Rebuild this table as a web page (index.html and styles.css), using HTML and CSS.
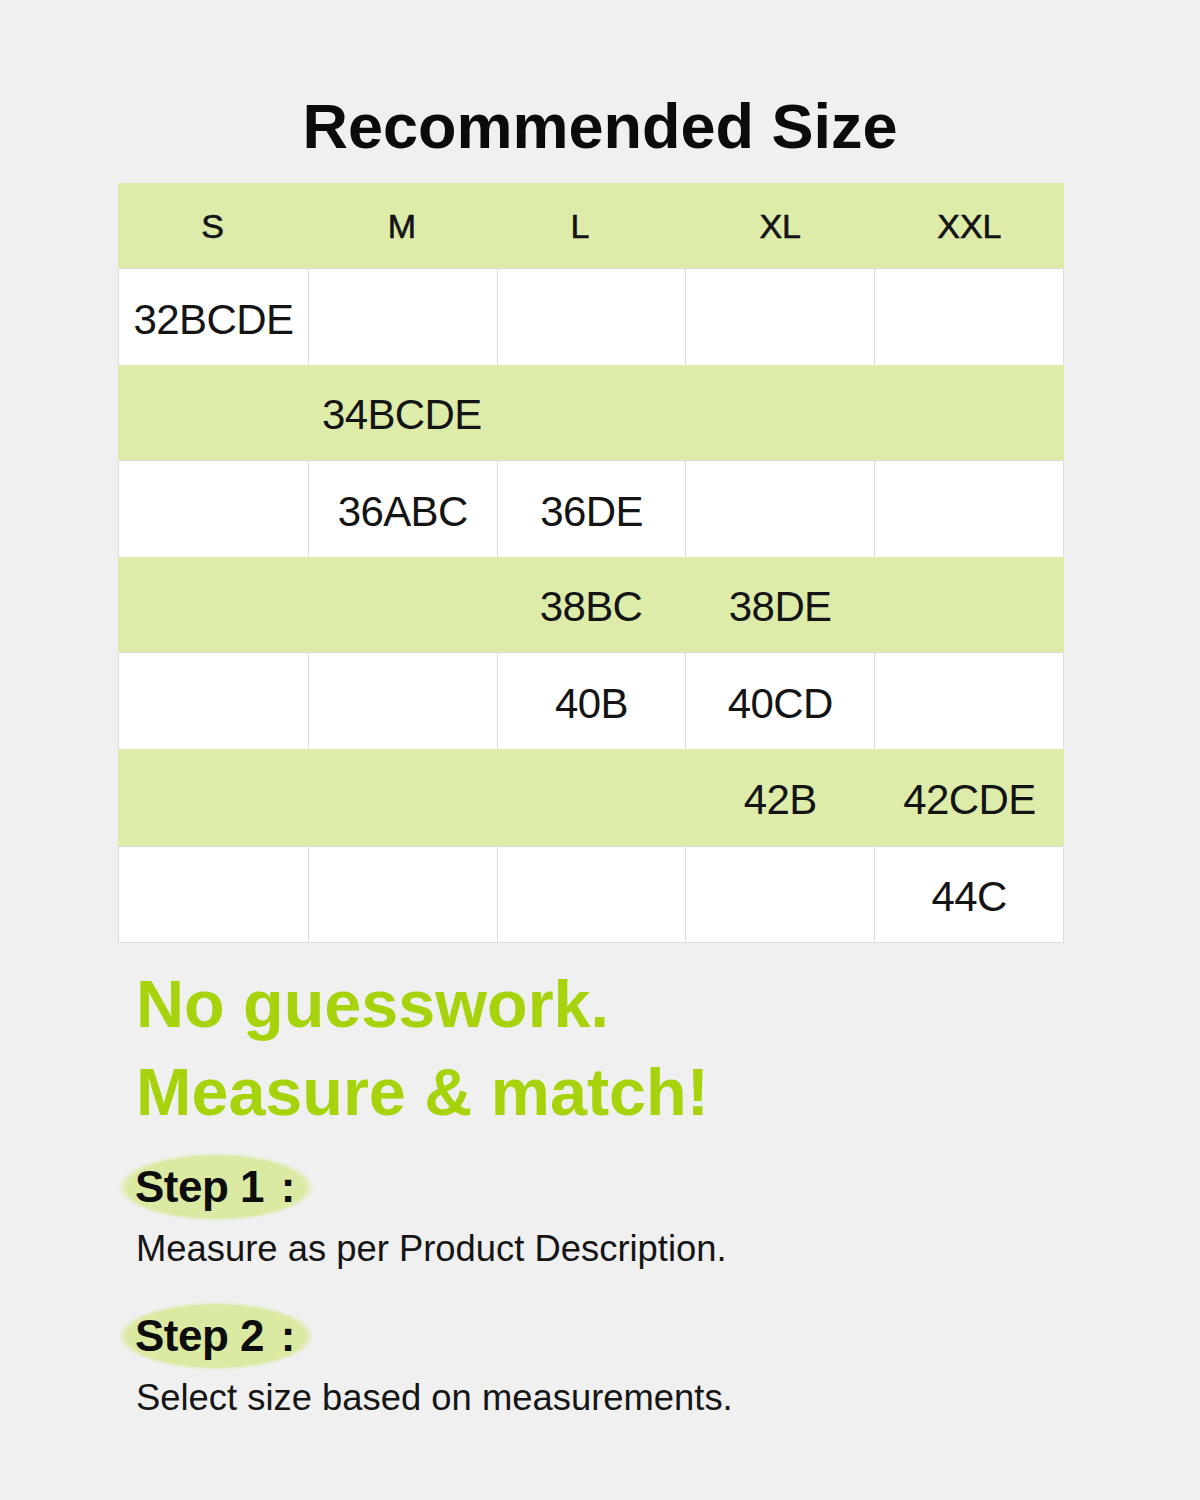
FILE: index.html
```html
<!DOCTYPE html>
<html lang="en">
<head>
<meta charset="utf-8">
<title>Recommended Size</title>
<link rel="stylesheet" href="styles.css">
</head>
<body>
<main class="page">
  <h1 class="title">Recommended Size</h1>
  <div class="chart">
    <div class="row head">
      <div class="cell">S</div><div class="cell">M</div><div class="cell shift">L</div><div class="cell">XL</div><div class="cell">XXL</div>
    </div>
    <div class="row white tall">
      <div class="cell">32BCDE</div><div class="cell"></div><div class="cell"></div><div class="cell"></div><div class="cell"></div>
    </div>
    <div class="row green short">
      <div class="cell"></div><div class="cell">34BCDE</div><div class="cell"></div><div class="cell"></div><div class="cell"></div>
    </div>
    <div class="row white tall">
      <div class="cell"></div><div class="cell">36ABC</div><div class="cell">36DE</div><div class="cell"></div><div class="cell"></div>
    </div>
    <div class="row green short">
      <div class="cell"></div><div class="cell"></div><div class="cell">38BC</div><div class="cell">38DE</div><div class="cell"></div>
    </div>
    <div class="row white tall">
      <div class="cell"></div><div class="cell"></div><div class="cell">40B</div><div class="cell">40CD</div><div class="cell"></div>
    </div>
    <div class="row green tall">
      <div class="cell"></div><div class="cell"></div><div class="cell"></div><div class="cell">42B</div><div class="cell">42CDE</div>
    </div>
    <div class="row white tall">
      <div class="cell"></div><div class="cell"></div><div class="cell"></div><div class="cell"></div><div class="cell">44C</div>
    </div>
  </div>
  <section class="guide">
    <h2 class="headline">No guesswork.<br>Measure &amp; match!</h2>
    <div class="step">
      <span class="label">Step 1 <span class="colon">:</span></span>
      <p class="desc">Measure as per Product Description.</p>
    </div>
    <div class="step second">
      <span class="label">Step 2 <span class="colon">:</span></span>
      <p class="desc">Select size based on measurements.</p>
    </div>
  </section>
</main>
</body>
</html>
```
FILE: styles.css
```css
html, body {
  margin: 0;
  padding: 0;
  background: #f0f0f0;
}
body {
  font-family: "Liberation Sans", Arial, "Noto Sans CJK SC", sans-serif;
  color: #111;
  width: 1200px;
  height: 1500px;
  overflow: hidden;
}
.page {
  padding: 90px 136px 0 118px;
}
.title {
  margin: 0 -136px 21px -118px;
  text-align: center;
  font-size: 63px;
  line-height: 72px;
  font-weight: 700;
  color: #0b0b0b;
  letter-spacing: 0;
}
.chart {
  width: 946px;
  display: flex;
  flex-direction: column;
}
.row {
  display: grid;
  grid-template-columns: repeat(5, 1fr);
  box-sizing: border-box;
}
.row.head {
  height: 85px;
  background: #deecaa;
}
.row.tall { height: 97px; }
.row.short { height: 95px; }
.row.green {
  background: #deecaa;
}
.row.white {
  background: #ffffff;
  border: 1px solid #dcdcdc;
  border-bottom: none;
}
.row.white:last-child {
  border-bottom: 1px solid #dcdcdc;
}
.row.white .cell + .cell {
  border-left: 1px solid #dcdcdc;
}
.cell {
  display: flex;
  align-items: center;
  justify-content: center;
  font-size: 42px;
  letter-spacing: -0.6px;
  color: #141414;
  padding-top: 5px;
  box-sizing: border-box;
}
.head .cell {
  font-size: 34px;
  letter-spacing: 0;
  padding-top: 2px;
  -webkit-text-stroke: 0.6px #141414;
}
.head .cell.shift {
  padding-right: 22px;
}
.guide {
  padding-top: 17px;
}
.headline {
  margin: 0 0 17px 18px;
  font-size: 66.5px;
  line-height: 88px;
  font-weight: 700;
  color: #a6d30c;
  letter-spacing: 0;
}
.step {
  display: flex;
  flex-direction: column;
  align-items: flex-start;
}
.step.second {
  margin-top: 31px;
}
.label {
  display: block;
  width: 196px;
  height: 68px;
  box-sizing: border-box;
  padding-left: 17px;
  font-size: 44px;
  line-height: 68px;
  font-weight: 700;
  color: #0d0d0d;
  letter-spacing: -0.5px;
  background: radial-gradient(ellipse closest-side, #dbeaa2 90%, rgba(219, 234, 162, 0) 100%);
}
.colon {
  margin-left: 5px;
}
.desc {
  margin: 6px 0 0 18px;
  font-size: 36.4px;
  line-height: 44px;
  color: #151515;
  letter-spacing: 0;
}
```
